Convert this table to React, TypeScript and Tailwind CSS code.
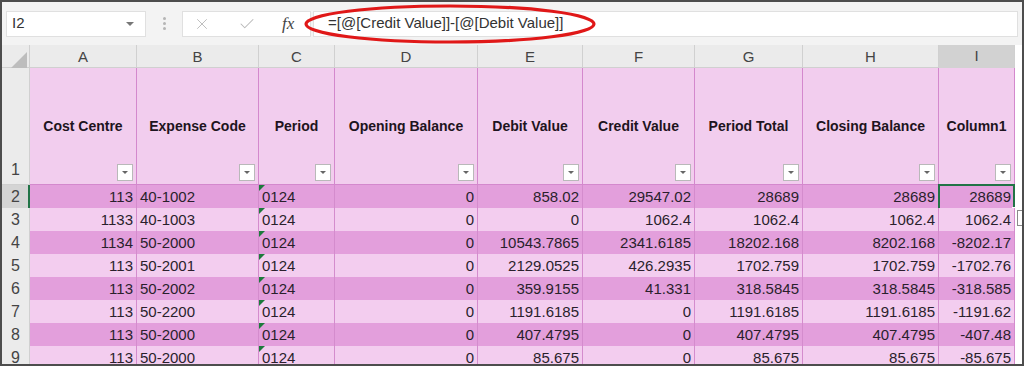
import { X, Check } from "lucide-react";

const cols = ["A", "B", "C", "D", "E", "F", "G", "H", "I"];

const headers = [
  "Cost Centre",
  "Expense Code",
  "Period",
  "Opening Balance",
  "Debit Value",
  "Credit Value",
  "Period Total",
  "Closing Balance",
  "Column1",
];

// cost, code, period, opening, debit, credit, total, closing, col1
const rows = [
  ["113", "40-1002", "0124", "0", "858.02", "29547.02", "28689", "28689", "28689"],
  ["1133", "40-1003", "0124", "0", "0", "1062.4", "1062.4", "1062.4", "1062.4"],
  ["1134", "50-2000", "0124", "0", "10543.7865", "2341.6185", "18202.168", "8202.168", "-8202.17"],
  ["113", "50-2001", "0124", "0", "2129.0525", "426.2935", "1702.759", "1702.759", "-1702.76"],
  ["113", "50-2002", "0124", "0", "359.9155", "41.331", "318.5845", "318.5845", "-318.585"],
  ["113", "50-2200", "0124", "0", "1191.6185", "0", "1191.6185", "1191.6185", "-1191.62"],
  ["113", "50-2000", "0124", "0", "407.4795", "0", "407.4795", "407.4795", "-407.48"],
  ["113", "50-2000", "0124", "0", "85.675", "0", "85.675", "85.675", "-85.675"],
];

const gridCols =
  "grid grid-cols-[28px_107px_122px_76px_143px_105px_112px_108px_136px_76px_1fr]";

function FilterButton() {
  return (
    <span className="absolute right-[3px] bottom-[3px] w-[16px] h-[17px] bg-white border border-[#b9b9b9] flex items-center justify-center">
      <span className="w-0 h-0 border-l-[3px] border-r-[3px] border-t-[3px] border-l-transparent border-r-transparent border-t-[#666]" />
    </span>
  );
}

export default function App() {
  return (
    <div
      className="relative w-[1024px] h-[366px] overflow-hidden bg-white border-2 border-[#4d4d4d]"
      style={{ fontFamily: '"Liberation Sans", Arial, sans-serif' }}
    >
      {/* Formula bar */}
      <div className="flex items-center h-[43px] bg-[#f3f3f3] pl-[4px] pr-[4px] gap-0">
        <div className="w-[140px] h-[26px] bg-white border border-[#e0e0e0] flex items-center justify-between px-[5px]">
          <span className="text-[15px] text-[#333]">I2</span>
          <span className="w-0 h-0 border-l-[4px] border-r-[4px] border-t-[4px] border-l-transparent border-r-transparent border-t-[#777] mr-[6px]" />
        </div>
        <div className="w-[36px] flex flex-col items-center justify-center gap-[2px]">
          <span className="w-[3px] h-[3px] rounded-full bg-[#b5b5b5]" />
          <span className="w-[3px] h-[3px] rounded-full bg-[#b5b5b5]" />
          <span className="w-[3px] h-[3px] rounded-full bg-[#b5b5b5]" />
        </div>
        <div className="w-[129px] h-[26px] bg-white border border-[#e0e0e0] flex items-center">
          <X size={18} strokeWidth={1.2} className="text-[#b8b8b8] ml-[10px]" />
          <Check size={18} strokeWidth={1.4} className="text-[#b8b8b8] ml-[27px]" />
          <span
            className="ml-[26px] text-[17px] italic text-[#444]"
            style={{ fontFamily: '"Liberation Serif", "Times New Roman", serif' }}
          >
            fx
          </span>
        </div>
        <div className="flex-1 h-[26px] bg-white border border-[#e0e0e0] flex items-center pl-[14px] ml-[2px]">
          <span className="text-[15px] text-[#333]">=[@[Credit Value]]-[@[Debit Value]]</span>
        </div>
      </div>

      {/* Red highlight ellipse */}
      <svg className="absolute left-[300px] top-[1px]" width="296" height="42" viewBox="0 0 296 42">
        <ellipse cx="148" cy="21" rx="144" ry="18" fill="none" stroke="#e01818" strokeWidth="3.2" />
      </svg>

      {/* Column letters */}
      <div className={`${gridCols} h-[23px] bg-[#ebebeb] border-b border-[#d0d0d0]`}>
        <div className="relative border-r border-[#d0d0d0]">
          <span className="absolute right-[3px] bottom-[3px] w-0 h-0 border-l-[16px] border-t-[16px] border-l-transparent border-t-transparent border-b-0 border-r-0">
          </span>
          <svg className="absolute right-[2px] bottom-[2px]" width="16" height="16" viewBox="0 0 16 16">
            <polygon points="16,0 16,16 0,16" fill="#bdbdbd" />
          </svg>
        </div>
        {cols.map((c) => (
          <div
            key={c}
            className={`flex items-center justify-center text-[15px] text-[#444] border-r border-[#d0d0d0] ${
              c === "I" ? "bg-[#d2d2d2] border-b-2 border-b-[#217346]" : ""
            }`}
          >
            {c}
          </div>
        ))}
        <div className="bg-white" />
      </div>

      {/* Header row */}
      <div className={`${gridCols} h-[117px]`}>
        <div className="flex items-end pl-[9px] pb-[2px] text-[16px] text-[#444] bg-[#ebebeb] border-r border-b border-[#d0d0d0]">
          1
        </div>
        {headers.map((h) => (
          <div
            key={h}
            className="relative flex items-center justify-center bg-[#f2cdee] border-r border-b border-[#d488cd] text-[14px] font-bold text-[#1e1420]"
          >
            {h}
            <FilterButton />
          </div>
        ))}
        <div className="bg-white" />
      </div>

      {/* Data rows */}
      {rows.map((r, i) => {
        const dark = i % 2 === 0;
        const bg = dark ? "bg-[#e39fdc]" : "bg-[#f3cdef]";
        return (
          <div key={i} className={`${gridCols} h-[23px]`}>
            <div
              className={`flex items-center pl-[9px] text-[16px] text-[#444] border-b border-[#d0d0d0] ${
                i === 0 ? "bg-[#d4d4d4] border-r-2 border-r-[#217346]" : "bg-[#ebebeb] border-r border-r-[#d0d0d0]"
              }`}
            >
              {i + 2}
            </div>
            {r.map((v, j) => {
              const left = j === 1 || j === 2;
              return (
                <div
                  key={j}
                  className={`relative flex items-center text-[15px] text-[#2a1f2c] ${bg} border-r border-b border-[#d48ccd] ${
                    left ? "justify-start pl-[3px]" : "justify-end pr-[3px]"
                  }`}
                >
                  {j === 2 && (
                    <svg className="absolute left-0 top-0" width="6" height="6" viewBox="0 0 6 6">
                      <polygon points="0,0 6,0 0,6" fill="#1d7a3c" />
                    </svg>
                  )}
                  {v}
                  {i === 0 && j === 8 && (
                    <>
                      <span className="absolute inset-[-1px] border-2 border-[#217346]" />
                      <span className="absolute right-[-4px] bottom-[-4px] w-[6px] h-[6px] bg-[#217346] border border-white" />
                    </>
                  )}
                </div>
              );
            })}
            <div className="relative bg-white">
              {i === 1 && (
                <span className="absolute left-[2px] top-[2px] w-[6px] h-[16px] border border-[#8a8a8a] bg-white" />
              )}
            </div>
          </div>
        );
      })}
    </div>
  );
}
